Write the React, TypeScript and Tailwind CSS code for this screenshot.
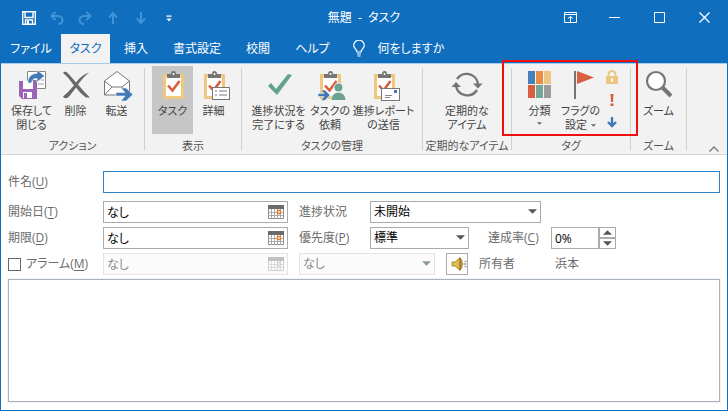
import type { ReactNode } from "react";

const Clipboard = () => (
  <>
    <rect x="6" y="4" width="21" height="25" fill="#edc87e" />
    <rect x="9" y="7" width="15" height="19" fill="#fff" />
    <path d="M10 4h4a2.500 3 0 0 1 5 0H23v4H10z" fill="#757575" />
    <circle cx="16.500" cy="4" r="1" fill="#fff" />
    <path d="M11 15.500l4.500 5L22.500 11" fill="none" stroke="#d75f3f" strokeWidth="2.600" />
  </>
);

const Icon = ({ children }: { children: ReactNode }) => (
  <svg viewBox="0 0 32 32" className="w-8 h-8 shrink-0" aria-hidden="true">
    {children}
  </svg>
);

const SaveCloseIcon = () => (
  <Icon>
    <path d="M11.500 1.500h18v17h-9v-8h-9z" fill="#fff" stroke="#888" />
    <path d="M26 6h2M25 10h3M22 14h6" stroke="#999" />
    <path d="M3 11h18v18H6l-3-3z" fill="#9b64b8" />
    <rect x="7" y="11" width="10" height="8" fill="#fff" />
    <rect x="7" y="22" width="9" height="6" fill="#fff" />
    <rect x="8" y="23" width="3" height="5" fill="#9b64b8" />
    <path
      d="M12 13c0-7 4-9.500 9-9.500V0l7.500 6-7.500 6V8.500c-4 0-5 1.500-5.500 4.500z"
      fill="#4179b8"
      stroke="#f2f2f2"
      strokeWidth="0.600"
    />
  </Icon>
);

const DeleteIcon = () => (
  <Icon>
    <path
      d="M3 3c1-1.500 3-1.500 4-.5 3 3 6 6 9 10 3-4 7-8 13-10-5 4-8 8-11 12 4 5 8 9 12 13h-4c-4-3-7-6-10-10-3 4-6 8-8 10-2 1-4 1-5-1 4-3 7-7 11-11C10 10 7 6 3 3z"
      fill="#686868"
    />
  </Icon>
);

const ForwardIcon = () => (
  <Icon>
    <path d="M3.500 11L16 1.500 28.500 11v14h-25z" fill="#fff" stroke="#777" />
    <path d="M3.500 11L11 17h10l7.500-6M3.500 25L11 17M21 17l5 5" fill="none" stroke="#777" />
    <path d="M15 22.500h9l-4-4.500h5l7 6.500-7 6.500h-5l4-5h-9z" fill="#4179b8" stroke="#f2f2f2" strokeWidth="0.600" />
  </Icon>
);

const TaskIcon = () => (
  <Icon>
    <Clipboard />
  </Icon>
);

const DetailIcon = () => (
  <Icon>
    <Clipboard />
    <rect x="14.500" y="17.500" width="17" height="12" fill="#fff" stroke="#777" />
    <path d="M17 21h2M17 25h2M21 21h8M21 25h8" stroke="#777" />
  </Icon>
);

const CompleteIcon = () => (
  <Icon>
    <path d="M5 16l3-3 5 6L25 4l4 1-15 20z" fill="#5fa38b" />
  </Icon>
);

const AssignIcon = () => (
  <Icon>
    <Clipboard />
    <circle cx="24.500" cy="17.500" r="4.500" fill="#6ba392" stroke="#f2f2f2" />
    <path d="M17 30.500c0-11 15-11 15 0z" fill="#6ba392" stroke="#f2f2f2" />
    <path d="M4 23.500h6L7 20h4l5 5-5 5.500H7l3-4H4z" fill="#4179b8" stroke="#f2f2f2" strokeWidth="0.600" />
  </Icon>
);

const ReportIcon = () => (
  <Icon>
    <Clipboard />
    <rect x="13.500" y="18.500" width="18" height="12" fill="#fff" stroke="#777" />
    <rect x="26" y="20" width="3" height="3" fill="#4179b8" />
    <path d="M17 25.500h7M17 27.500h5" stroke="#888" />
  </Icon>
);

const RecurIcon = () => (
  <Icon>
    <path
      d="M6 9A11.500 11.500 0 0 1 27 14M26 20A11.500 11.500 0 0 1 5 16"
      fill="none"
      stroke="#757575"
      strokeWidth="2.400"
    />
    <path d="M22 13.500h9.500L27 18.500zM0.500 17h9.500L5 12z" fill="#757575" />
  </Icon>
);

const CategoryIcon = () => (
  <Icon>
    <path fill="#4680ba" d="M4 1h7v13H4z" />
    <path fill="#e88e45" d="M12 1h7v13h-7z" />
    <path fill="#ebc682" d="M20 1h7v13h-7z" />
    <path fill="#d65f42" d="M4 15h7v13H4z" />
    <path fill="#72a695" d="M12 15h7v13h-7z" />
    <path fill="#9b9b9b" d="M20 15h7v13h-7z" />
  </Icon>
);

const FlagIcon = () => (
  <Icon>
    <path d="M10 1v28" stroke="#757575" strokeWidth="2" />
    <path d="M12 1l17 6.500L12 14z" fill="#d9603e" />
  </Icon>
);

const ZoomIcon = () => (
  <Icon>
    <circle cx="13" cy="11" r="9" fill="#fff" stroke="#757575" strokeWidth="2.200" />
    <path d="M19.500 17.500l8.500 8.500" stroke="#757575" strokeWidth="4" />
  </Icon>
);

const Caret = ({ className }: { className: string }) => (
  <svg viewBox="0 0 10 5" className={className} aria-hidden="true">
    <path d="M0 0h10L5 5z" fill="currentColor" />
  </svg>
);

const RibbonButton = ({
  icon,
  lines,
  width,
  active,
  menu,
}: {
  icon: ReactNode;
  lines: string[];
  width: string;
  active?: boolean;
  menu?: boolean;
}) => (
  <button
    type="button"
    className={`flex flex-col items-center h-17 pt-1 gap-0.5 shrink-0 ${width} ${active ? "bg-[#c6c6c6]" : ""}`}
  >
    {icon}
    <span className="flex flex-col items-center leading-[14px] whitespace-nowrap">
      {lines.map((line, i) => (
        <span key={line} className="flex items-center gap-1">
          {line}
          {menu && i === 1 && <Caret className="w-[5px] h-[3px] text-[#666]" />}
        </span>
      ))}
      {menu && lines.length === 1 && <Caret className="w-[5px] h-[3px] mt-1 text-[#666]" />}
    </span>
  </button>
);

const Group = ({
  label,
  width,
  children,
}: {
  label: string;
  width: string;
  children: ReactNode;
}) => (
  <>
    <section aria-label={label} className={`relative flex flex-col items-center shrink-0 pt-0.5 ${width}`}>
      <div className="flex">{children}</div>
      <div className="mt-1 h-4 leading-4 whitespace-nowrap text-[#555]">{label}</div>
    </section>
    <div className="w-px shrink-0 mt-1 mb-1 bg-[#cfcfcf]" />
  </>
);

const tabs = ["挿入", "書式設定", "校閲", "ヘルプ"];

const CalendarIcon = () => (
  <svg viewBox="0 0 16 14" className="w-4 h-3.5" aria-hidden="true">
    <path fill="#fff" stroke="#888" d="M.5.5h15v13H.5z" />
    <path fill="#6b6b6b" d="M0 0h16v4H0z" />
    <path d="M3.500 4v10M6.500 4v10M9.500 4v10M12.500 4v10M0 7.500h16M0 10.500h16" stroke="#aaa" />
    <path fill="#fff" stroke="#e67e30" strokeWidth="1.300" d="M9.500 5.500h3v3h-3z" />
  </svg>
);

const FieldLabel = ({
  id,
  text,
  accel,
  width,
}: {
  id: string;
  text: string;
  accel?: string;
  width: string;
}) => (
  <label htmlFor={id} className={`shrink-0 whitespace-nowrap text-[#6b6b6b] ${width}`}>
    {text}
    {accel && (
      <>
        (<u className="underline-offset-2">{accel}</u>)
      </>
    )}
  </label>
);

const DateField = ({ id, disabled }: { id: string; disabled?: boolean }) => (
  <div
    className={`flex items-center w-[185px] h-[22px] shrink-0 border pr-[3px] ${disabled ? "border-[#e3e3e3] bg-[#fbfbfb] text-[#8a8a8a]" : "border-[#ababab] text-black"}`}
  >
    <input id={id} defaultValue="なし" disabled={disabled} className="flex-1 min-w-0 h-full px-[3px] outline-none" />
    <button type="button" aria-label="カレンダー" disabled={disabled} className="disabled:opacity-40 disabled:grayscale">
      <CalendarIcon />
    </button>
  </div>
);

const SelectField = ({
  id,
  value,
  width,
  disabled,
  label,
}: {
  id: string;
  value: string;
  width: string;
  disabled?: boolean;
  label?: string;
}) => (
  <div className={`relative shrink-0 ${width}`}>
    <select
      id={id}
      aria-label={label}
      disabled={disabled}
      className="block appearance-none w-full h-[22px] border border-[#ababab] bg-white px-[3px] text-black outline-none disabled:border-[#e3e3e3] disabled:bg-[#fbfbfb] disabled:text-[#8a8a8a] disabled:opacity-100"
    >
      <option>{value}</option>
    </select>
    <Caret
      className={`absolute right-1 top-2 w-[9px] h-[5px] pointer-events-none ${disabled ? "text-[#8c9a9a]" : "text-[#555]"}`}
    />
  </div>
);

const TitleBar = () => (
  <header className="grid grid-cols-[1fr_auto_1fr] items-center h-[33px] text-white">
    <div className="flex items-center gap-3.5 pl-[21px]">
      <button type="button" aria-label="保存">
        <svg viewBox="0 0 14 14" className="w-3.5 h-3.5" fill="none" stroke="#fff" strokeWidth="1.400">
          <path d="M.7.7h12.600v12.600H.7zM3 .7v5.800h8V.7M3.500 13.300V9h7v4.300" />
          <path d="M5 10h2v3H5z" fill="#fff" stroke="none" />
        </svg>
      </button>
      <button type="button" aria-label="元に戻す">
        <svg viewBox="0 0 14 14" className="w-3.5 h-3.5" fill="none" stroke="#3f93d6" strokeWidth="2">
          <path d="M5.500 1L1.500 5l4 4M2 5h6c6 0 6 8 0 8" />
        </svg>
      </button>
      <button type="button" aria-label="やり直し">
        <svg viewBox="0 0 14 14" className="w-3.5 h-3.5" fill="none" stroke="#3f93d6" strokeWidth="2">
          <path d="M8.500 1l4 4-4 4M12 5H6c-6 0-6 8 0 8" />
        </svg>
      </button>
      <button type="button" aria-label="前のアイテム">
        <svg viewBox="0 0 14 14" className="w-3.5 h-3.5" fill="none" stroke="#3f93d6" strokeWidth="2">
          <path d="M7 13V2M3 6.500L7 2l4 4.500" />
        </svg>
      </button>
      <button type="button" aria-label="次のアイテム">
        <svg viewBox="0 0 14 14" className="w-3.5 h-3.5" fill="none" stroke="#3f93d6" strokeWidth="2">
          <path d="M7 1v11M3 7.500l4 4.500 4-4.500" />
        </svg>
      </button>
      <button type="button" aria-label="カスタマイズ">
        <svg viewBox="0 0 14 14" className="w-3.5 h-3.5" fill="#fff">
          <path d="M4.500 4.500h5v1.200h-5zM4.500 7.500h5L7 10.500z" />
        </svg>
      </button>
    </div>
    <h1>無題 &nbsp;-&nbsp; タスク</h1>
    <div className="flex items-center justify-end gap-8 pr-[17px]">
      <button type="button" aria-label="リボンの表示オプション">
        <svg viewBox="0 0 13 11" className="w-[13px] h-[11px]" fill="none" stroke="#fff">
          <path d="M.5.5h12v10H.5zM.5 2.500h12M6.500 10V4.500M4 6.500l2.500-2 2.500 2" />
        </svg>
      </button>
      <button type="button" aria-label="最小化">
        <svg viewBox="0 0 11 11" className="w-[11px] h-[11px]" stroke="#fff">
          <path d="M0 5.500h11" />
        </svg>
      </button>
      <button type="button" aria-label="最大化" className="ml-0.5">
        <svg viewBox="0 0 11 11" className="w-[11px] h-[11px]" fill="none" stroke="#fff">
          <path d="M.5.5h10v10H.5z" />
        </svg>
      </button>
      <button type="button" aria-label="閉じる" className="ml-0.5">
        <svg viewBox="0 0 11 11" className="w-[11px] h-[11px]" stroke="#fff" strokeWidth="1.300">
          <path d="M.5.5l10 10M10.500.5l-10 10" />
        </svg>
      </button>
    </div>
  </header>
);

const TabBar = () => (
  <nav className="flex items-stretch h-[29px] text-white whitespace-nowrap">
    <button type="button" className="w-[60px]">
      ファイル
    </button>
    <button type="button" className="w-[49px] bg-[#f2f2f2] text-[#106ebe]">
      タスク
    </button>
    <div className="flex gap-[25px] pl-3.5">
      {tabs.map((tab) => (
        <button type="button" key={tab}>
          {tab}
        </button>
      ))}
    </div>
    <button type="button" className="flex items-center gap-3 ml-6">
      <svg viewBox="0 0 12 17" className="w-3 h-[17px]" fill="none" stroke="#fff" strokeWidth="1.200" aria-hidden="true">
        <path d="M4 12c0-3-3.300-3.500-3.300-6.500a5.300 5.300 0 0 1 10.600 0C11.300 8.500 8 9 8 12zM4 14h4M4.500 16h3" />
      </svg>
      何をしますか
    </button>
  </nav>
);

const Ribbon = () => (
  <div className="flex h-[92px] border-t border-b border-t-[#a8cdec] border-b-[#d2d2d2] bg-[#f2f2f2] text-[11px] text-[#444]">
    <Group label="アクション" width="w-[143px]">
      <RibbonButton icon={<SaveCloseIcon />} lines={["保存して", "閉じる"]} width="w-[47px]" />
      <RibbonButton icon={<DeleteIcon />} lines={["削除"]} width="w-[41px]" />
      <RibbonButton icon={<ForwardIcon />} lines={["転送"]} width="w-[41px]" />
    </Group>
    <Group label="表示" width="w-24">
      <RibbonButton icon={<TaskIcon />} lines={["タスク"]} width="w-[41px]" active />
      <RibbonButton icon={<DetailIcon />} lines={["詳細"]} width="w-[41px]" />
    </Group>
    <Group label="タスクの管理" width="w-[180px]">
      <RibbonButton icon={<CompleteIcon />} lines={["進捗状況を", "完了にする"]} width="w-[62px]" />
      <RibbonButton icon={<AssignIcon />} lines={["タスクの", "依頼"]} width="w-[41px]" />
      <RibbonButton icon={<ReportIcon />} lines={["進捗レポート", "の送信"]} width="w-[66px]" />
    </Group>
    <Group label="定期的なアイテム" width="w-[88px]">
      <RibbonButton icon={<RecurIcon />} lines={["定期的な", "アイテム"]} width="w-[62px]" />
    </Group>
    <Group label="タグ" width="w-[118px]">
      <RibbonButton icon={<CategoryIcon />} lines={["分類"]} width="w-[41px]" menu />
      <RibbonButton icon={<FlagIcon />} lines={["フラグの", "設定"]} width="w-[41px]" menu />
      <div className="flex flex-col items-center gap-1.5 w-[22px] pt-1">
        <button type="button" aria-label="プライベート">
          <svg viewBox="0 0 12 16" className="w-3 h-4">
            <path d="M2.500 7V4.500a3.500 3.500 0 0 1 7 0V7" fill="none" stroke="#ebc682" strokeWidth="2" />
            <path d="M0 6h12v8H0z" fill="#ebc682" />
            <path d="M5 8.500h2v3H5z" fill="#fff" />
          </svg>
        </button>
        <button type="button" aria-label="重要度 - 高">
          <svg viewBox="0 0 12 16" className="w-3 h-4" fill="#d9603e">
            <path d="M4.500 2h3L7 10H5zM4.500 11.500h3V14h-3z" />
          </svg>
        </button>
        <button type="button" aria-label="重要度 - 低">
          <svg viewBox="0 0 12 16" className="w-3 h-4" fill="none" stroke="#4179b8" strokeWidth="2.400">
            <path d="M6 3v9M2 8l4 4 4-4" />
          </svg>
        </button>
      </div>
      <div className="absolute -left-2.5 -right-2 -top-1 h-[76px] border-2 border-[#f01010] pointer-events-none z-10" />
    </Group>
    <Group label="ズーム" width="w-[55px]">
      <RibbonButton icon={<ZoomIcon />} lines={["ズーム"]} width="w-[47px]" />
    </Group>
    <button type="button" aria-label="リボンを折りたたむ" className="ml-auto self-end px-2 py-0.5">
      <svg viewBox="0 0 10 6" className="w-2.5 h-1.5" fill="none" stroke="#777" strokeWidth="1.300">
        <path d="M.5 5.500L5 1l4.500 4.500" />
      </svg>
    </button>
  </div>
);

const TaskForm = () => (
  <form className="flex flex-col flex-1 px-[7px] pt-4 pb-2 bg-white">
    <div className="flex items-center mb-2">
      <FieldLabel id="subject" text="件名" accel="U" width="w-[95px]" />
      <input id="subject" className="flex-1 min-w-0 h-[22px] border border-[#2b83cb] px-1 outline-none" />
    </div>
    <div className="flex flex-col gap-1">
      <div className="flex items-center">
        <FieldLabel id="start" text="開始日" accel="T" width="w-[95px]" />
        <DateField id="start" />
        <FieldLabel id="status" text="進捗状況" width="w-[71px] ml-[11px]" />
        <SelectField id="status" value="未開始" width="w-[171px]" />
      </div>
      <div className="flex items-center">
        <FieldLabel id="due" text="期限" accel="D" width="w-[95px]" />
        <DateField id="due" />
        <FieldLabel id="priority" text="優先度" accel="P" width="w-[71px] ml-[11px]" />
        <SelectField id="priority" value="標準" width="w-[99px]" />
        <FieldLabel id="percent" text="達成率" accel="C" width="w-[63px] ml-[19px]" />
        <input id="percent" defaultValue="0%" className="w-12 h-[22px] border border-[#ababab] px-[3px] text-black outline-none" />
        <div className="flex flex-col w-[17px] h-[22px] text-[#555]">
          <button type="button" aria-label="増やす" className="flex flex-1 items-center justify-center border border-[#ababab]">
            <Caret className="w-[9px] h-[5px] rotate-180" />
          </button>
          <button type="button" aria-label="減らす" className="flex flex-1 items-center justify-center border border-[#ababab]">
            <Caret className="w-[9px] h-[5px]" />
          </button>
        </div>
      </div>
      <div className="flex items-center">
        <div className="flex items-center w-[95px] shrink-0">
          <input id="alarm" type="checkbox" className="appearance-none w-[13px] h-[13px] mr-[5px] border border-[#666] bg-white" />
          <FieldLabel id="alarm" text="アラーム" accel="M" width="" />
        </div>
        <DateField id="alarm-date" disabled />
        <SelectField id="alarm-time" label="アラームの時刻" value="なし" width="w-[136px] ml-[11px]" disabled />
        <button
          type="button"
          aria-label="アラーム音"
          className="flex items-center justify-end w-[22px] h-[22px] ml-[11px] border border-[#ababab] overflow-hidden"
        >
          <svg viewBox="0 0 16 14" className="w-4 h-3.5" aria-hidden="true">
            <path d="M1 5h3l5-4.500v13L4 9H1z" fill="#e0bd4f" stroke="#a07c20" strokeWidth="0.800" />
            <path d="M9 1c3 2 3 10 0 12z" fill="#c9a136" stroke="#7d6218" strokeWidth="0.800" />
            <path d="M15.500 4l-2 1M12.500 7h3M15.500 10l-2-1" stroke="#777" fill="none" />
          </svg>
        </button>
        <span className="w-[72px] ml-[11px] text-[#6b6b6b]">所有者</span>
        <span className="px-1 text-[#6b6b6b]">浜本</span>
      </div>
    </div>
    <textarea
      aria-label="本文"
      className="flex-1 w-full mt-1 border border-[#abb4bd] p-1 shadow-[0_0_0_1px_#eef1f3] resize-none outline-none"
    />
  </form>
);

const App = () => (
  <div className="flex flex-col min-h-screen border border-[#106ebe] bg-[#106ebe] text-xs leading-4 font-['Open_Sans','Noto_Sans_CJK_JP',sans-serif] [font-feature-settings:'palt']">
    <TitleBar />
    <TabBar />
    <Ribbon />
    <TaskForm />
  </div>
);

export default App;
